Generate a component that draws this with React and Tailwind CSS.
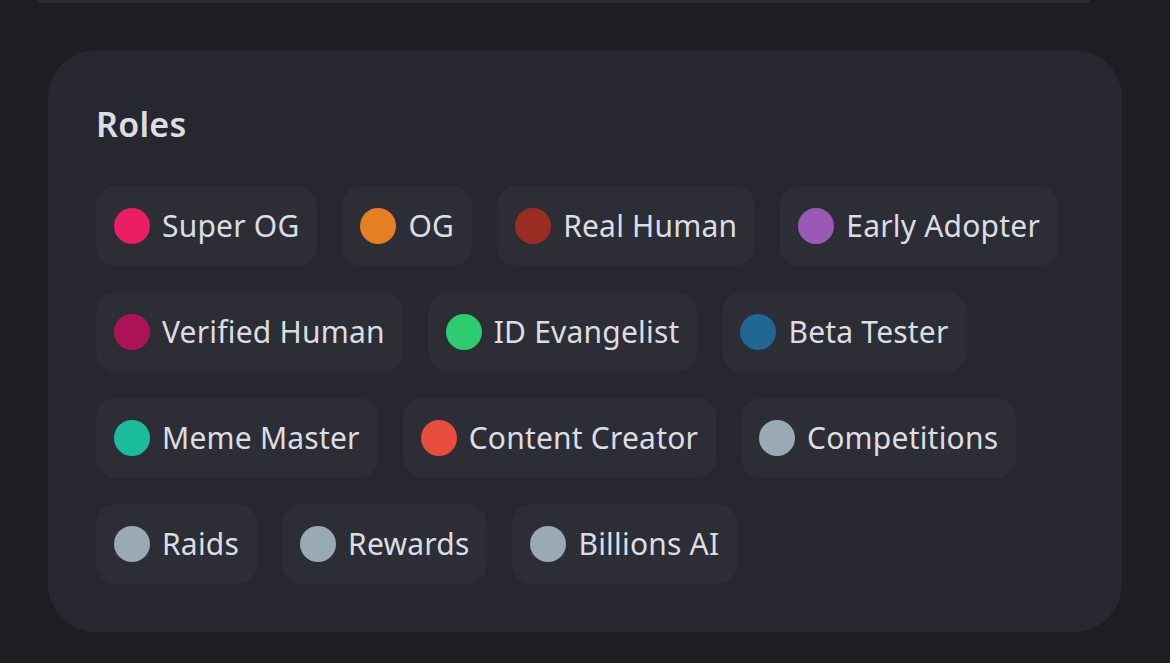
import React from 'react'

const roles = [
  { name: 'Super OG', color: 'bg-[#e91e63]' },
  { name: 'OG', color: 'bg-[#e67e22]' },
  { name: 'Real Human', color: 'bg-[#992d22]' },
  { name: 'Early Adopter', color: 'bg-[#9b59b6]' },
  { name: 'Verified Human', color: 'bg-[#ad1457]' },
  { name: 'ID Evangelist', color: 'bg-[#2ecc71]' },
  { name: 'Beta Tester', color: 'bg-[#206694]' },
  { name: 'Meme Master', color: 'bg-[#1abc9c]' },
  { name: 'Content Creator', color: 'bg-[#e74c3c]' },
  { name: 'Competitions', color: 'bg-[#99aab5]' },
  { name: 'Raids', color: 'bg-[#99aab5]' },
  { name: 'Rewards', color: 'bg-[#99aab5]' },
  { name: 'Billions AI', color: 'bg-[#99aab5]' },
]

function RoleChip({ name, color }) {
  return (
    <div className="flex h-[80px] items-center gap-[12px] rounded-[20px] bg-[#2d2e35] pl-[18px] pr-[18px]">
      <span className={`h-[36px] w-[36px] shrink-0 rounded-full ${color}`}></span>
      <span className="text-[30px] leading-none tracking-[0.2px] text-[#dcdde3]">{name}</span>
    </div>
  )
}

export default function App() {
  return (
    <div
      className="flex min-h-[663px] w-full flex-col bg-[#1d1e22]"
      style={{ fontFamily: '"Noto Sans", "Open Sans", sans-serif' }}
    >
      <div className="mx-[37px] h-[3px] w-[1053px] rounded-b-[20px] bg-[#2a2b30]"></div>

      <div className="mx-[48px] mt-[47px] w-[1074px] rounded-[48px] bg-[#27272f] px-[48px] pb-[48px] pt-[56px]">
        <h2 className="text-[34px] font-semibold leading-[36px] tracking-[0.3px] text-[#dcdde3]">Roles</h2>
        <div className="mt-[44px] flex flex-wrap gap-x-[25px] gap-y-[26px]">
          {roles.map((r) => (
            <RoleChip key={r.name} name={r.name} color={r.color} />
          ))}
        </div>
      </div>
    </div>
  )
}
